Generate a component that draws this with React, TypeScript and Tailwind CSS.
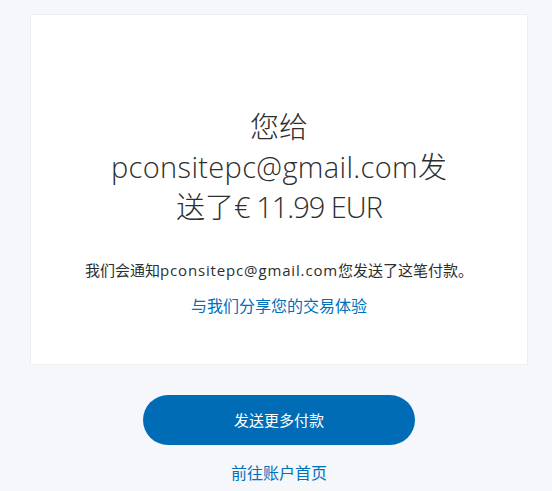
import React from "react";

export default function App() {
  const latin = { fontFamily: '"Open Sans", "Noto Sans CJK SC", sans-serif' };
  return (
    <div className="min-h-[491px] w-full bg-[#f5f7fa] pt-[14px]" style={latin}>
      <div className="mx-[30px] flex h-[351px] w-[498px] flex-col items-center border border-[#eceef0] bg-white pt-[92px]">
        <h1 className="text-center text-[29px] font-light leading-[40px] text-[#2c2e2f]">
          <span className="block">您给</span>
          <span className="block">
            <span className="tracking-[0.35px]">pconsitepc@gmail.com</span>发
          </span>
          <span className="block">
            送了<span className="tracking-[-1px]">€ 11.99 EUR</span>
          </span>
        </h1>
        <p className="mt-[32px] text-center text-[15px] leading-[22px] text-[#2c2e2f]">
          我们会通知<span className="tracking-[0.85px]">pconsitepc@gmail.com</span>您发送了这笔付款。
        </p>
        <a className="mt-[14px] text-center text-[16px] leading-[22px] text-[#0070ba]" href="#">
          与我们分享您的交易体验
        </a>
      </div>
      <div className="mx-[30px] flex w-[498px] flex-col items-center pt-[30px]">
        <button className="flex h-[50px] w-[272px] items-center justify-center rounded-full bg-[#006cb5] text-[15px] text-white">
          发送更多付款
        </button>
        <a className="mt-[17px] text-[16px] leading-[22px] text-[#0070ba]" href="#">
          前往账户首页
        </a>
      </div>
    </div>
  );
}
